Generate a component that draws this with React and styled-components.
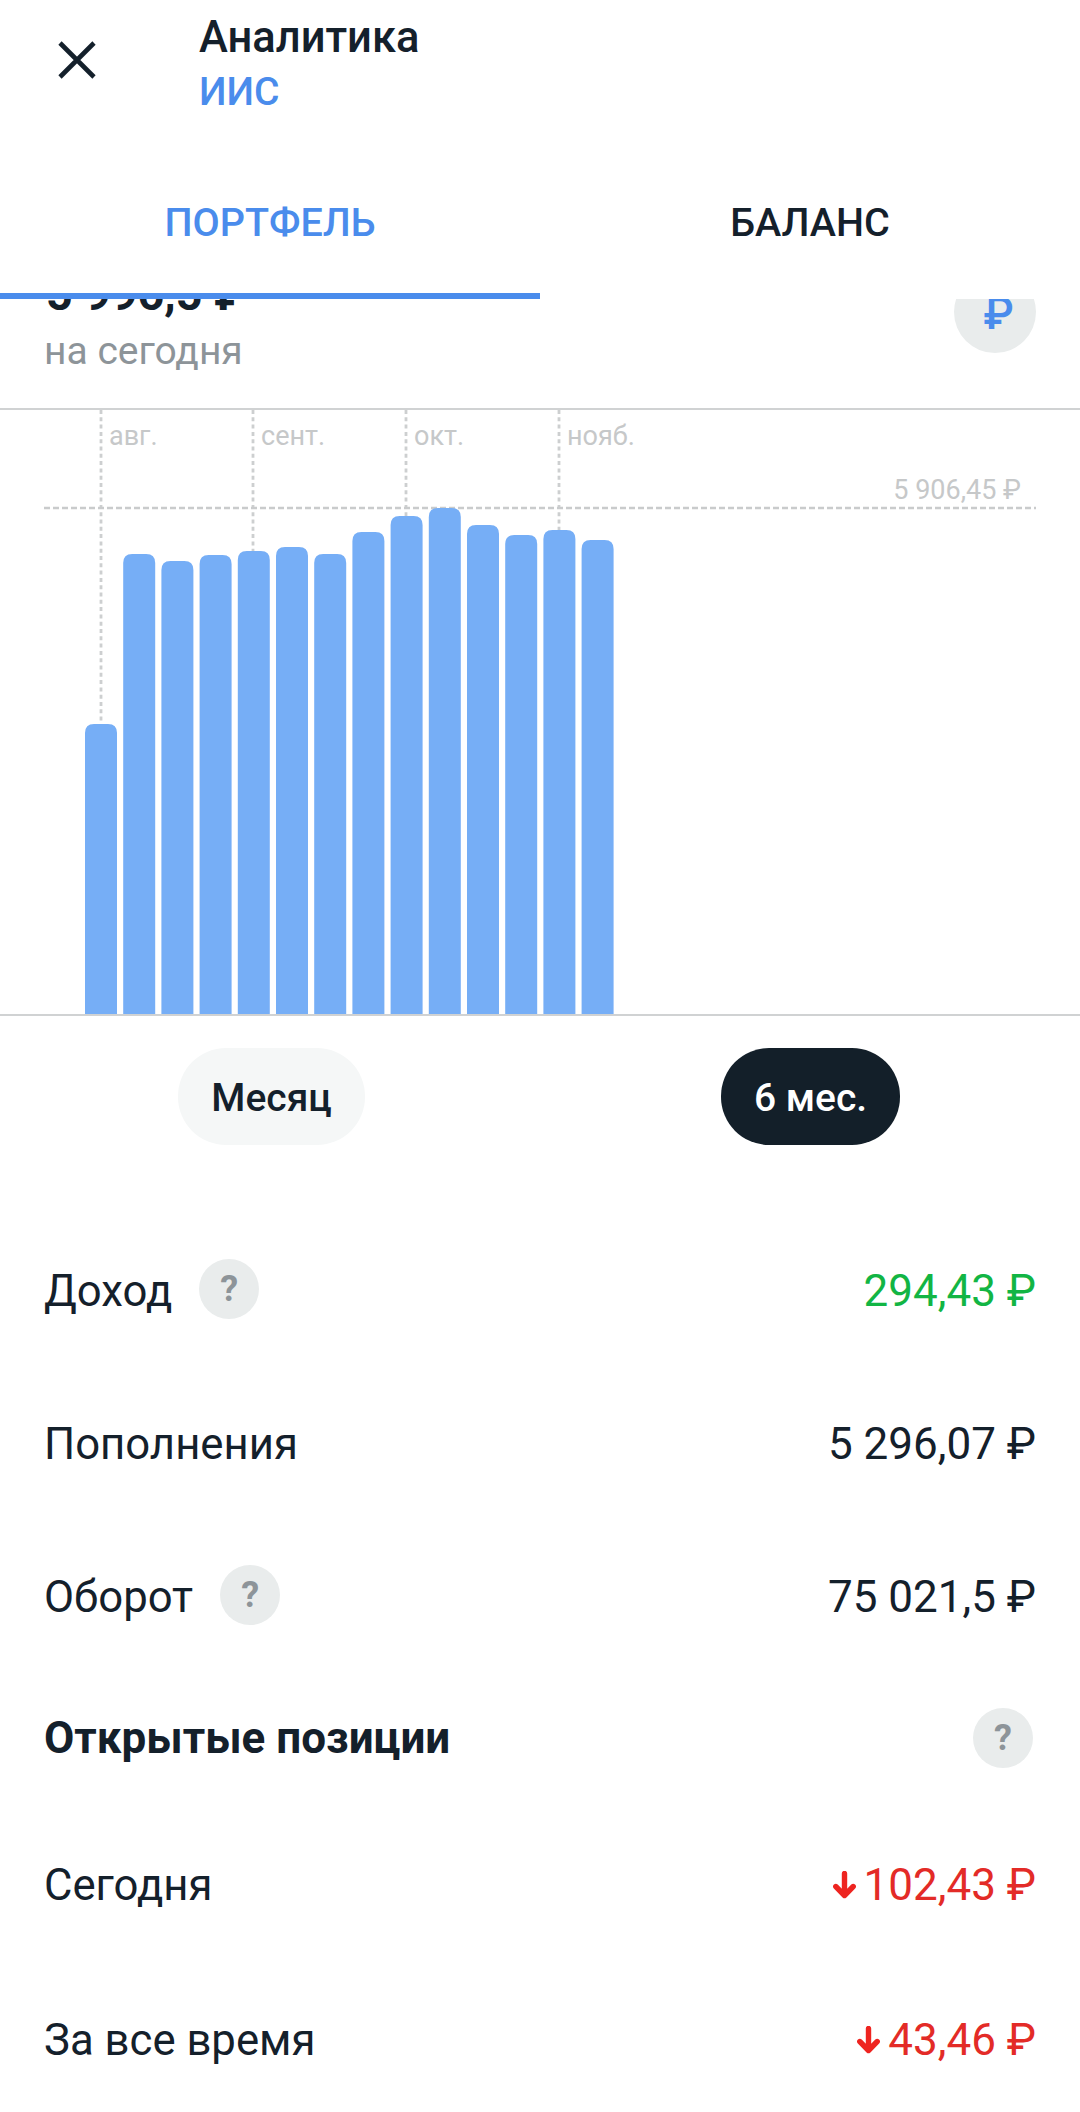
import styled, { createGlobalStyle } from "styled-components";

const GlobalStyle = createGlobalStyle`
  html, body {
    margin: 0;
    padding: 0;
    background: #fff;
    overflow: hidden;
  }
  body {
    font-family: Roboto, "Liberation Sans", sans-serif;
    color: #14202b;
  }
`;

const barTops = [724, 554, 561, 555, 551, 547, 554, 532, 516, 508, 525, 535, 530, 540];
const months = [
  { label: "авг.", x: 101 },
  { label: "сент.", x: 253 },
  { label: "окт.", x: 406 },
  { label: "нояб.", x: 559 },
];
const CHART_TOP = 408;

const CloseIcon = () => (
  <svg width="38" height="38" viewBox="0 0 38 38" fill="none">
    <path d="M2 2L36 36M36 2L2 36" stroke="#14202b" strokeWidth="4.6" />
  </svg>
);

const DownArrow = () => (
  <svg width="23" height="28" viewBox="0 0 23 28" fill="none">
    <path
      d="M11.5 2.5V24M2.8 15.5L11.5 24.5L20.2 15.5"
      stroke="#ee2420"
      strokeWidth="5.4"
      strokeLinecap="round"
      strokeLinejoin="round"
    />
  </svg>
);

const barPath = (x, top) => {
  const w = 32;
  const r = 9;
  return `M${x} 606V${top + r}Q${x} ${top} ${x + r} ${top}H${x + w - r}Q${x + w} ${top} ${x + w} ${top + r}V606Z`;
};

const Chart = () => (
  <ChartSvg width="1080" height="604" viewBox="0 2 1080 604">
    {months.map((m) => (
      <g key={m.label}>
        <line x1={m.x} x2={m.x} y1="2" y2="330" stroke="#cdcfd0" strokeWidth="2.8" strokeDasharray="4 3.3" />
        <MonthLabel x={m.x + 8} y="37">{m.label}</MonthLabel>
      </g>
    ))}
    <line x1="44" x2="1036" y1="100" y2="100" stroke="#c9cbcc" strokeWidth="2.4" strokeDasharray="6 3" />
    <MonthLabel x="1021" y="91" textAnchor="end">5 906,45 ₽</MonthLabel>
    {barTops.map((top, i) => (
      <path key={i} d={barPath(85 + i * 38.2, top - CHART_TOP)} fill="#76aef6" />
    ))}
  </ChartSvg>
);

const App = () => (
  <Page>
    <GlobalStyle />
    <Header>
      <CloseButton><CloseIcon /></CloseButton>
      <TitleBlock>
        <Title>Аналитика</Title>
        <Subtitle>ИИС</Subtitle>
      </TitleBlock>
    </Header>
    <Tabs>
      <Tab $active>ПОРТФЕЛЬ</Tab>
      <Tab>БАЛАНС</Tab>
    </Tabs>
    <SummaryClip>
      <SummaryRow>
        <div>
          <Total>5 996,5 ₽</Total>
          <TotalNote>на сегодня</TotalNote>
        </div>
        <CurrencyBadge>₽</CurrencyBadge>
      </SummaryRow>
    </SummaryClip>
    <Chart />
    <Periods>
      <PeriodCell><Period>Месяц</Period></PeriodCell>
      <PeriodCell><Period $active>6 мес.</Period></PeriodCell>
    </Periods>
    <Rows>
      <Row $height={153}>
        <Label>Доход<Help>?</Help></Label>
        <Value $color="#12b544">294,43 ₽</Value>
      </Row>
      <Row $height={153}>
        <Label>Пополнения</Label>
        <Value>5 296,07 ₽</Value>
      </Row>
      <Row $height={153}>
        <Label>Оборот<Help>?</Help></Label>
        <Value>75 021,5 ₽</Value>
      </Row>
      <Row $height={131}>
        <SectionLabel>Открытые позиции</SectionLabel>
        <Help $right>?</Help>
      </Row>
      <Row $height={162}>
        <Label>Сегодня</Label>
        <Value $color="#e32b27"><DownArrow />102,43 ₽</Value>
      </Row>
      <Row $height={148}>
        <Label>За все время</Label>
        <Value $color="#e32b27"><DownArrow />43,46 ₽</Value>
      </Row>
    </Rows>
  </Page>
);

export default App;

const Page = styled.div`
  width: 1080px;
  height: 2112px;
  overflow: hidden;
  background: #fff;
`;

const Header = styled.header`
  height: 150px;
  display: flex;
  align-items: flex-start;
  padding-left: 58px;
  box-sizing: border-box;
`;

const CloseButton = styled.div`
  width: 38px;
  height: 38px;
  margin-top: 41px;
`;

const TitleBlock = styled.div`
  margin-left: 103px;
  padding-top: 11px;
`;

const Title = styled.div`
  font-size: 43.5px;
  line-height: 54px;
  font-weight: 500;
`;

const Subtitle = styled.div`
  font-size: 39px;
  line-height: 54px;
  font-weight: 500;
  color: #4a8cec;
`;

const Tabs = styled.nav`
  display: grid;
  grid-template-columns: 1fr 1fr;
  height: 149px;
`;

const Tab = styled.div`
  display: flex;
  align-items: center;
  justify-content: center;
  padding-top: 2px;
  font-size: 39.5px;
  font-weight: 500;
  color: ${(props) => (props.$active ? "#4a8cec" : "#14202b")};
  border-bottom: 6px solid ${(props) => (props.$active ? "#4a8cec" : "transparent")};
`;

const SummaryClip = styled.section`
  height: 109px;
  overflow: hidden;
  padding: 0 44px;
`;

const SummaryRow = styled.div`
  display: flex;
  justify-content: space-between;
  align-items: flex-start;
  margin-top: -32px;
`;

const Total = styled.div`
  font-size: 46.5px;
  line-height: 54px;
  font-weight: 700;
  padding-left: 2px;
`;

const TotalNote = styled.div`
  font-size: 39px;
  line-height: 50px;
  color: #8d9499;
  margin-top: 5px;
`;

const CurrencyBadge = styled.div`
  width: 82px;
  height: 82px;
  border-radius: 50%;
  background: #e9ecec;
  color: #4a8cec;
  display: flex;
  align-items: center;
  justify-content: center;
  box-sizing: border-box;
  padding: 4px 0 0 7px;
  font-size: 44px;
  font-weight: 500;
  margin-top: 4px;
`;

const ChartSvg = styled.svg`
  display: block;
  border-top: 2px solid #d0d2d3;
  border-bottom: 2px solid #d0d2d3;
  margin-bottom: -2px;
`;

const MonthLabel = styled.text`
  font-family: Roboto, sans-serif;
  font-size: 27px;
  fill: #c6c8c9;
`;

const Periods = styled.div`
  display: grid;
  grid-template-columns: 1fr 1fr;
  padding: 34px 0 0 2px;
`;

const PeriodCell = styled.div`
  display: flex;
  justify-content: center;
`;

const Period = styled.div`
  height: 97px;
  padding: 2px 33px 0;
  box-sizing: border-box;
  border-radius: 48px;
  display: flex;
  align-items: center;
  font-size: 39px;
  font-weight: 500;
  background: ${(props) => (props.$active ? "#131f29" : "#f5f7f7")};
  color: ${(props) => (props.$active ? "#fff" : "#14202b")};
`;

const Rows = styled.div`
  margin-top: 68px;
`;

const Row = styled.div`
  height: ${(props) => props.$height}px;
  padding: 0 44px;
  display: flex;
  align-items: center;
  justify-content: space-between;
`;

const Label = styled.div`
  display: flex;
  align-items: center;
  padding-top: 2px;
  font-size: 43.7px;
`;

const SectionLabel = styled.div`
  font-size: 44px;
  font-weight: 700;
`;

const Help = styled.span`
  width: 60px;
  height: 60px;
  border-radius: 50%;
  background: #e9ecec;
  color: #8d9499;
  display: flex;
  align-items: center;
  justify-content: center;
  font-size: 36px;
  font-weight: 700;
  margin-top: ${(props) => (props.$right ? "0" : "-4px")};
  margin-left: ${(props) => (props.$right ? "0" : "27px")};
  margin-right: ${(props) => (props.$right ? "3px" : "0")};
`;

const Value = styled.div`
  display: flex;
  align-items: center;
  gap: 8px;
  padding-top: 2px;
  font-size: 44px;
  color: ${(props) => props.$color || "#14202b"};
`;
